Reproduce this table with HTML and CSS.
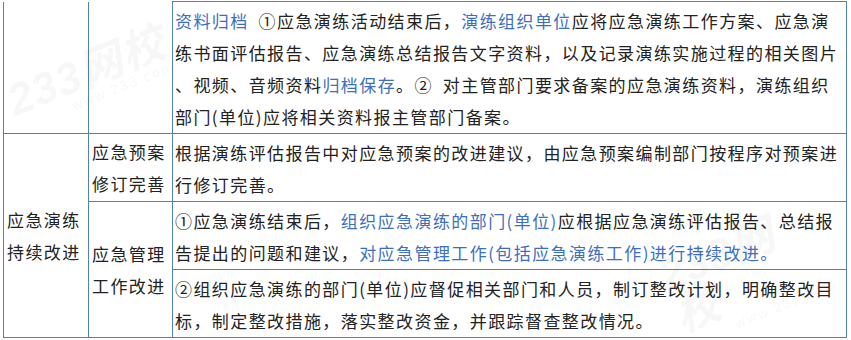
FILE: index.html
```html
<!DOCTYPE html>
<html lang="zh-CN">
<head>
<meta charset="utf-8">
<title>应急演练持续改进</title>
<link rel="stylesheet" href="styles.css">
</head>
<body>
<div class="page">
  <table class="grid">
    <colgroup>
      <col class="c1">
      <col class="c2">
      <col class="c3">
    </colgroup>
    <tbody>
      <tr class="cont">
        <td class="open"></td>
        <td class="open"></td>
        <td class="txt"><span class="hl">资料归档</span>&ensp;①应急演练活动结束后，<span class="hl">演练组织单位</span>应将应急演练工作方案、应急演练书面评估报告、应急演练总结报告文字资料，以及记录演练实施过程的相关图片、视频、音频资料<span class="hl">归档保存</span>。②&ensp;对主管部门要求备案的应急演练资料，演练组织部门(单位)应将相关资料报主管部门备案。</td>
      </tr>
      <tr>
        <td class="lbl" rowspan="3">应急演练持续改进</td>
        <td class="lbl">应急预案修订完善</td>
        <td class="txt">根据演练评估报告中对应急预案的改进建议，由应急预案编制部门按程序对预案进行修订完善。</td>
      </tr>
      <tr>
        <td class="lbl" rowspan="2">应急管理工作改进</td>
        <td class="txt">①应急演练结束后，<span class="hl">组织应急演练的部门(单位)</span>应根据应急演练评估报告、总结报告提出的问题和建议，<span class="hl">对应急管理工作(包括应急演练工作)进行持续改进。</span></td>
      </tr>
      <tr>
        <td class="txt">②组织应急演练的部门(单位)应督促相关部门和人员，制订整改计划，明确整改目标，制定整改措施，落实整改资金，并跟踪督查整改情况。</td>
      </tr>
    </tbody>
  </table>
  <div class="mark mark-a"><span class="big">233网校</span><span class="small">www.233.com</span></div>
  <div class="mark mark-b"><span class="big">233网校</span><span class="small">www.233.com</span></div>
</div>
</body>
</html>
```

FILE: styles.css
```css
html, body {
  margin: 0;
  padding: 0;
  background: #ffffff;
}

.page {
  position: relative;
  width: 851px;
  height: 340px;
  overflow: hidden;
  padding: 1px 0 0 3px;
  box-sizing: border-box;
}

.grid {
  border-collapse: collapse;
  table-layout: fixed;
  width: 843px;
  font-family: "Noto Sans CJK SC", "Noto Sans", sans-serif;
  font-size: 17px;
  letter-spacing: 1.42px;
  line-height: 32px;
  color: #222222;
}

.c1 { width: 85px; }
.c2 { width: 84px; }
.c3 { width: 674px; }

.grid td {
  border: 1px solid #4f81bd;
  padding: 3px 4px 0 2px;
  vertical-align: top;
  text-align: left;
}

.grid td.open {
  border-top: none;
}

.grid td.lbl {
  vertical-align: middle;
  padding: 1px 2px 0 3px;
}

.grid td.txt {
  padding: 3px 4px 0 2px;
  line-break: anywhere;
}

.hl {
  color: #3d6fc0;
}

.mark {
  position: absolute;
  display: flex;
  flex-direction: column;
  align-items: flex-end;
  pointer-events: none;
  transform: rotate(-22deg);
  transform-origin: left bottom;
  color: rgba(0, 0, 0, 0.05);
  font-family: "Liberation Sans", "Noto Sans CJK SC", sans-serif;
  font-weight: bold;
  line-height: 1;
}

.mark .big {
  font-size: 44px;
  font-style: italic;
  letter-spacing: 1px;
}

.mark .small {
  font-size: 14px;
  letter-spacing: 2px;
  margin-top: -2px;
  font-weight: normal;
}

.mark-a {
  left: 22px;
  top: 78px;
}

.mark-b {
  left: 690px;
  top: 250px;
}
```
